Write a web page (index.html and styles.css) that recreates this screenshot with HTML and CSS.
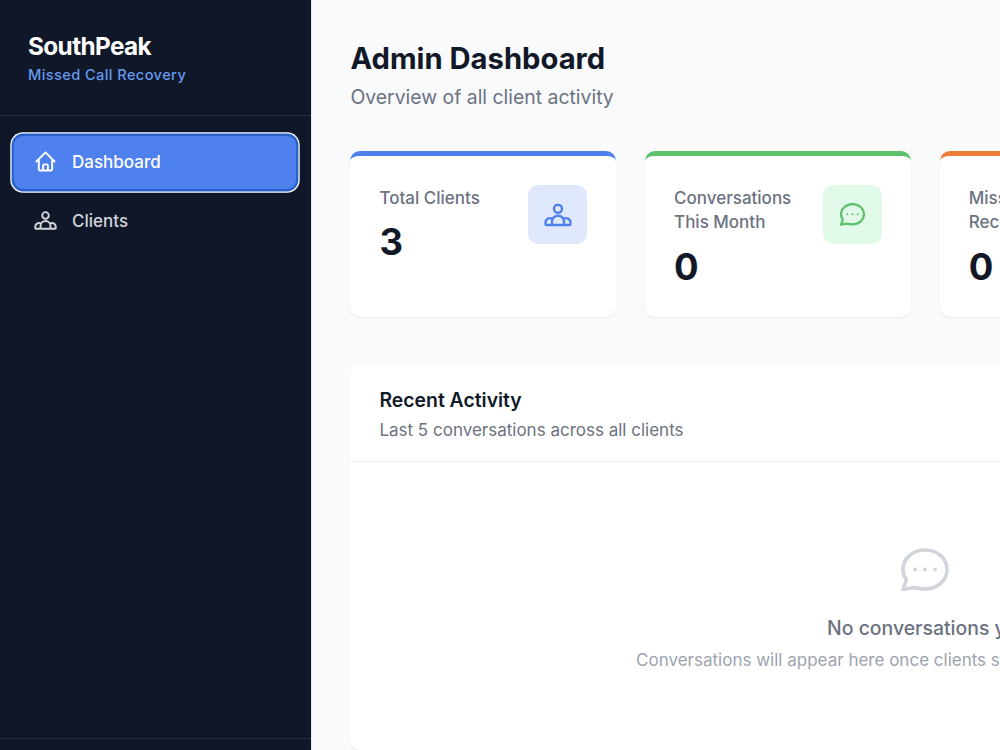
FILE: index.html
```
<!DOCTYPE html>
<html lang="en">
<head>
    <meta charset="UTF-8">
    <meta name="viewport" content="width=device-width, initial-scale=1.0">
    <title>Admin Dashboard</title>
    <link rel="stylesheet" href="styles.css">
</head>
<body>
    <svg class="sprite">
        <symbol id="chat" viewBox="0 0 48 44">
            <path d="M24 2C36.500 2 46 10.500 46 21.500S36.500 41 24 41C20 41 16.500 40 12.500 39.500L2 41.500L5.500 31.500C3 28.500 2 25.500 2 21.500C2 10.500 11.500 2 24 2Z"/>
            <g class="dots">
                <circle cx="14" cy="21.500" r="1.900"/>
                <circle cx="24" cy="21.500" r="1.900"/>
                <circle cx="34" cy="21.500" r="1.900"/>
            </g>
        </symbol>
        <symbol id="clients" viewBox="0 0 28 24">
            <circle cx="14" cy="5.800" r="4"/>
            <path d="M8 22V18.500A6 5.800 0 0 1 20 18.500V22M8.500 15.500C4.500 14.300 1.500 16 1.500 20V21Q1.500 22 2.500 22H25.500Q26.500 22 26.500 21V20C26.500 16 23.500 14.300 19.500 15.500"/>
        </symbol>
    </svg>
    <aside class="sidebar">
        <div class="brand">
            <h2>SouthPeak</h2>
            <p>Missed Call Recovery</p>
        </div>
        <nav>
            <a class="link active">
                <svg viewBox="0 0 22 22">
                    <path d="M1.500 11L11 1.500L20.500 11M4 9V19Q4 20.500 5.500 20.500H16.500Q18 20.500 18 19V9M8.500 20V15.500Q8.500 14 10 14H12Q13.500 14 13.500 15.500V20"/>
                </svg>
                Dashboard
            </a>
            <a class="link">
                <svg class="people" viewBox="0 0 28 24"><use href="#clients"/></svg>
                Clients
            </a>
        </nav>
        <div class="user"></div>
    </aside>
    <main>
        <h1>Admin Dashboard</h1>
        <p class="subtitle">Overview of all client activity</p>
        <section class="cards">
            <div class="card blue">
                <div>
                    <p>Total Clients</p>
                    <strong>3</strong>
                </div>
                <span class="icon"><svg class="people"><use href="#clients"/></svg></span>
            </div>
            <div class="card green">
                <div>
                    <p>Conversations<br>This Month</p>
                    <strong>0</strong>
                </div>
                <span class="icon"><svg class="bubble"><use href="#chat"/></svg></span>
            </div>
            <div class="card orange">
                <div>
                    <p>Missed Calls<br>Recovered</p>
                    <strong>0</strong>
                </div>
            </div>
            <div class="card"></div>
        </section>
        <section class="panel">
            <div class="panel-header">
                <h3>Recent Activity</h3>
                <p>Last 5 conversations across all clients</p>
            </div>
            <div class="empty">
                <svg><use href="#chat"/></svg>
                <h4>No conversations yet</h4>
                <p>Conversations will appear here once clients start receiving missed calls.</p>
            </div>
        </section>
    </main>
</body>
</html>
```

FILE: styles.css
```
*{
    box-sizing: border-box;
    margin: 0;
    padding: 0;
}
body{
    display: flex;
    height: 750px;
    overflow: hidden;
    background-color: #f9fafc;
    color: #111827;
    font-family: Inter, sans-serif;
}
svg{
    fill: none;
    stroke: currentColor;
    stroke-width: 2;
    stroke-linecap: round;
    stroke-linejoin: round;
}
.sprite{
    position: absolute;
    width: 0;
    height: 0;
}
.dots{
    fill: currentColor;
    stroke: none;
}
.sidebar{
    display: flex;
    flex-direction: column;
    flex: none;
    width: 311px;
    background-color: #101728;
}
.brand{
    height: 116px;
    padding: 32px 28px 0;
    border-bottom: 1px solid #252c3b;
}
.brand h2{
    color: white;
    font-size: 24.3px;
    line-height: 29px;
    letter-spacing: -0.6px;
}
.brand p{
    margin-top: 5px;
    color: #669aef;
    font-size: 14.6px;
    font-weight: 500;
    line-height: 19px;
    letter-spacing: 0.4px;
}
nav{
    display: flex;
    flex-direction: column;
    flex: 1;
    gap: 5px;
    padding: 20px 15px 0 14px;
}
.link{
    display: flex;
    align-items: center;
    gap: 15px;
    height: 53px;
    padding-left: 20px;
    border-radius: 9px;
    color: #d1d5db;
    font-size: 17px;
    font-weight: 500;
}
.link svg{
    width: 23px;
    height: 21px;
    margin-top: -1px;
}
.active{
    padding-bottom: 1px;
    background-color: #4f81ee;
    color: white;
    box-shadow: 0 0 0 2.4px #2962c9, 0 0 0 3.7px white;
}
.user{
    height: 12px;
    border-top: 1px solid #252c3b;
}
main{
    flex: none;
    width: 1228px;
    padding: 39px 39px 39px 38.4px;
    border-left: 1px solid #e5e7eb;
}
h1{
    font-size: 29.2px;
    line-height: 39px;
}
.subtitle{
    margin-top: 5px;
    color: #6b7280;
    font-size: 19.4px;
    line-height: 29px;
}
.cards{
    display: grid;
    grid-template-columns: repeat(4, 1fr);
    gap: 29px;
    margin-top: 39px;
}
.card{
    display: flex;
    justify-content: space-between;
    height: 166px;
    padding: 29px;
    border-top: 5px solid #4f81ee;
    border-radius: 10px;
    background-color: white;
    box-shadow: 0 1px 2px rgba(0, 0, 0, 0.07);
}
.card p{
    margin-top: 1px;
    color: #6b7280;
    font-size: 17px;
    font-weight: 500;
    line-height: 24.3px;
}
.card strong{
    display: block;
    margin-top: 10px;
    font-size: 36.5px;
    line-height: 44px;
}
.icon{
    display: flex;
    align-items: center;
    justify-content: center;
    width: 59px;
    height: 59px;
    border-radius: 10px;
}
.blue .icon{
    background-color: #dfe9fb;
    color: #4f81ee;
}
.green{
    border-color: #5cc168;
}
.green .icon{
    background-color: #e1f9e8;
    color: #5cc168;
}
.orange{
    border-color: #eb7b35;
}
.people{
    width: 28px;
    height: 24px;
    stroke-width: 2.4;
}
.bubble{
    width: 25px;
    height: 23px;
    stroke-width: 4.4;
}
.panel{
    height: 385px;
    margin-top: 48px;
    border-radius: 10px;
    background-color: white;
    box-shadow: 0 1px 2px rgba(0, 0, 0, 0.07);
}
.panel-header{
    height: 97px;
    padding: 21px 29px 0;
    border-bottom: 1px solid #f0f1f3;
}
.panel-header h3{
    font-size: 19.4px;
    font-weight: 600;
    line-height: 29px;
}
.panel-header p{
    margin-top: 3px;
    color: #6b7280;
    font-size: 17px;
    line-height: 24px;
}
.empty{
    padding-top: 86px;
    text-align: center;
}
.empty svg{
    display: block;
    width: 48px;
    height: 44px;
    margin: 0 auto;
    color: #d1d5db;
    stroke-width: 3.6;
}
.empty h4{
    margin-top: 22px;
    color: #6b7280;
    font-size: 19.4px;
    font-weight: 500;
    line-height: 29px;
}
.empty p{
    margin-top: 5px;
    color: #9ca3af;
    font-size: 17px;
    line-height: 24px;
}
```
